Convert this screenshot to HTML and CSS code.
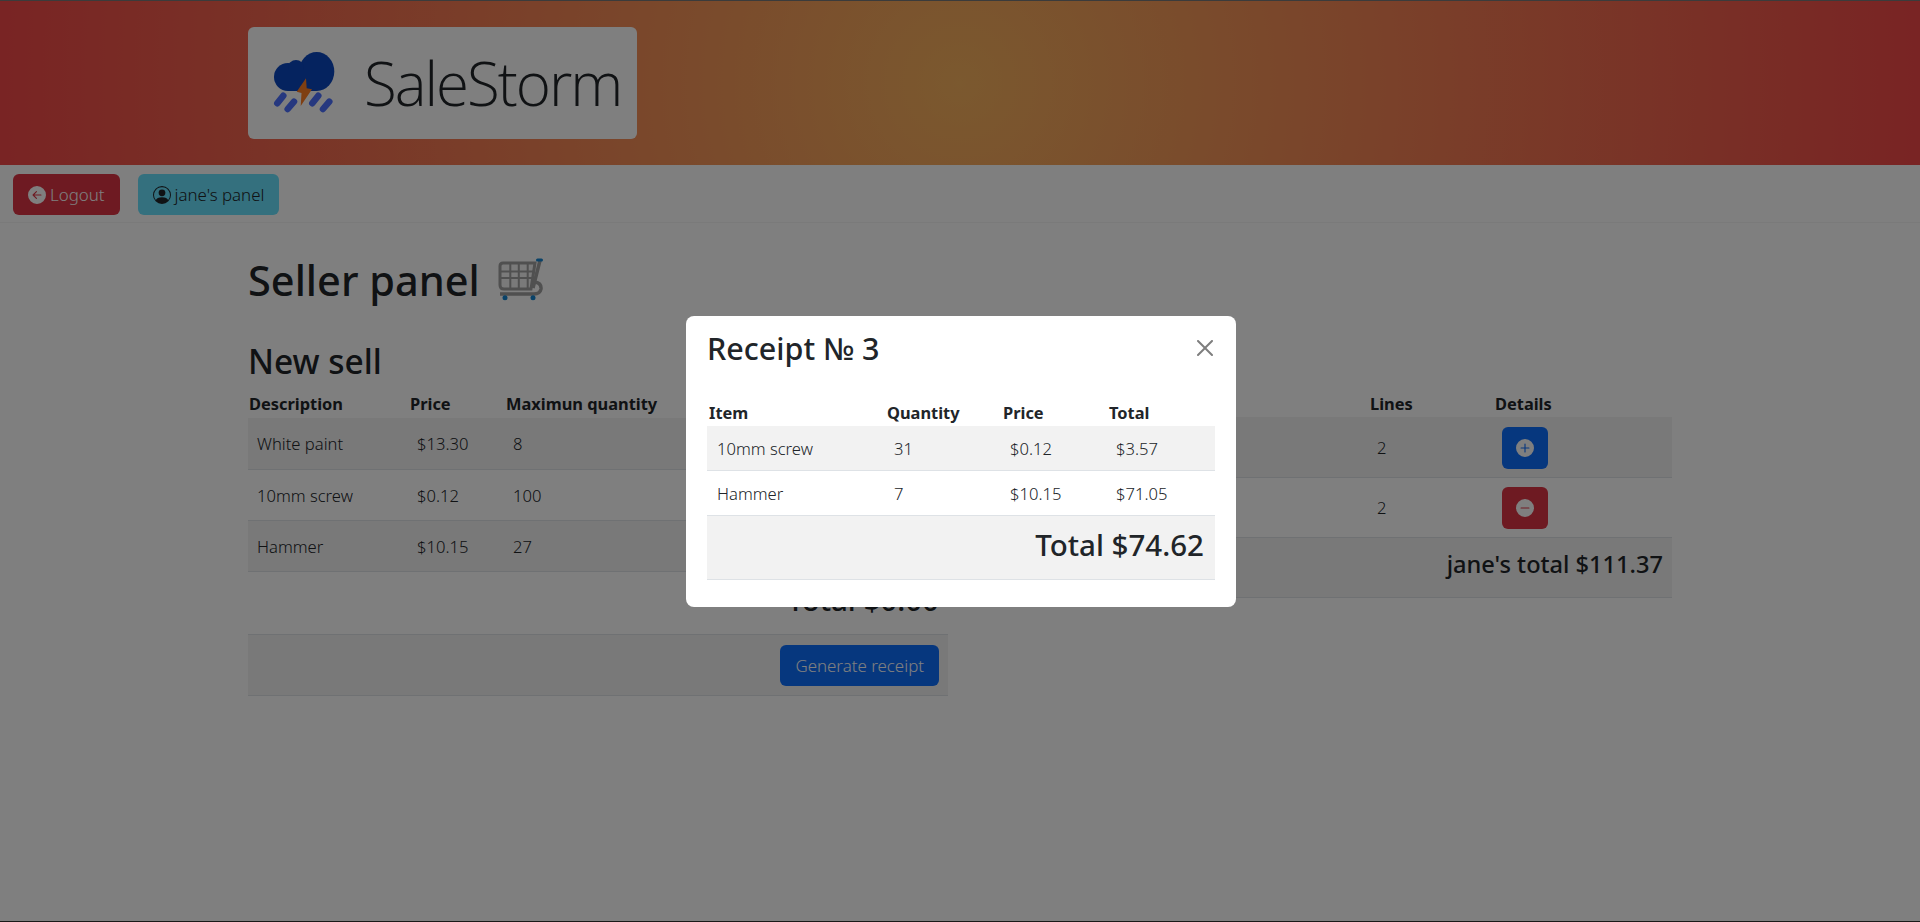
FILE: index.html
```html
<!DOCTYPE html>
<html lang="en">
<head>
    <meta charset="UTF-8">
    <meta name="viewport" content="width=device-width, initial-scale=1.0">
    <title>SaleStorm</title>
    <link rel="stylesheet" href="styles.css">
</head>
<body>

<header class="banner">
    <div class="container">
        <div class="logo">
            <svg class="logo-icon" viewBox="20 -3 70 112">
                <ellipse class="cloud" cx="66.700" cy="41.500" rx="17.600" ry="19.500"/>
                <circle class="cloud" cx="38" cy="47" r="14"/>
                <circle class="cloud" cx="46" cy="38" r="8"/>
                <rect class="cloud" x="38" y="40" width="28" height="21"/>
                <path class="drop" d="M33.300 65.700 27.300 73.300M44 71.700 37.700 79M68.300 65.700 62.300 73.300M79.300 71.700 73 79"/>
                <path class="bolt" d="M56 48.300 46.700 61.700 51.500 63 50.700 76 62 59.300 56.700 58.300z"/>
            </svg>
            <span class="logo-text">SaleStorm</span>
        </div>
    </div>
</header>

<nav class="topnav">
    <button class="btn btn-danger" type="button">
        <svg class="bi" viewBox="0 0 16 16"><path d="M8 0a8 8 0 1 0 0 16A8 8 0 0 0 8 0zm3.500 7.500a.5.5 0 0 1 0 1H5.707l2.147 2.146a.5.5 0 0 1-.708.708l-3-3a.5.5 0 0 1 0-.708l3-3a.5.5 0 1 1 .708.708L5.707 7.500H11.500z"/></svg>
        Logout
    </button>
    <button class="btn btn-info" type="button">
        <svg class="bi" viewBox="0 0 16 16"><path d="M11 6a3 3 0 1 1-6 0 3 3 0 0 1 6 0z"/><path fill-rule="evenodd" d="M0 8a8 8 0 1 1 16 0A8 8 0 0 1 0 8zm8-7a7 7 0 0 0-5.468 11.370C3.242 11.226 4.805 10 8 10s4.757 1.225 5.468 2.370A7 7 0 0 0 8 1z"/></svg>
        jane's panel
    </button>
</nav>

<main class="container">
    <h1 class="page-title">Seller panel
        <svg class="cart" viewBox="498 258 46 46">
            <path class="cart-basket" d="M503 264H535L531 290H504Q500 290 500 286V267Q500 264 503 264z"/>
            <path class="cart-grid" d="M510.300 264V290M518.800 264V290M527.700 264V290M500 272.500H534M500 279H533"/>
            <path class="cart-frame" d="M540 261.500 533 289M535 283Q541.500 284 541 290 540 295 534 295H500"/>
            <path class="cart-handle" d="M537.500 261H541.500"/>
            <circle class="cart-wheel" cx="505" cy="298.700" r="2.500"/>
            <circle class="cart-wheel" cx="533" cy="298.700" r="2.500"/>
        </svg>
    </h1>

    <div class="columns">
        <section>
            <h2 class="section-title">New sell</h2>
            <table class="table table-stock">
                <colgroup><col class="c-desc"><col class="c-price"><col></colgroup>
                <thead>
                    <tr><th>Description</th><th>Price</th><th>Maximun quantity</th></tr>
                </thead>
                <tbody>
                    <tr><td>White paint</td><td>$13.30</td><td>8</td></tr>
                    <tr><td>10mm screw</td><td>$0.12</td><td>100</td></tr>
                    <tr><td>Hammer</td><td>$10.15</td><td>27</td></tr>
                    <tr class="row-total"><td colspan="3"><h3>Total $0.00</h3></td></tr>
                    <tr class="row-action"><td colspan="3"><button class="btn btn-primary" type="button">Generate receipt</button></td></tr>
                </tbody>
            </table>
        </section>

        <section class="sales">
            <table class="table table-sales">
                <colgroup><col class="c-blank"><col class="c-lines"><col></colgroup>
                <thead>
                    <tr><th></th><th>Lines</th><th>Details</th></tr>
                </thead>
                <tbody>
                    <tr>
                        <td></td><td>2</td>
                        <td><button class="btn btn-primary btn-icon" type="button"><svg class="bi" viewBox="0 0 16 16"><path d="M16 8A8 8 0 1 1 0 8a8 8 0 0 1 16 0zM8.500 4.500a.5.5 0 0 0-1 0v3h-3a.5.5 0 0 0 0 1h3v3a.5.5 0 0 0 1 0v-3h3a.5.5 0 0 0 0-1h-3v-3z"/></svg></button></td>
                    </tr>
                    <tr>
                        <td></td><td>2</td>
                        <td><button class="btn btn-danger btn-icon" type="button"><svg class="bi" viewBox="0 0 16 16"><path d="M16 8A8 8 0 1 1 0 8a8 8 0 0 1 16 0zM4.500 7.500a.5.5 0 0 0 0 1h7a.5.5 0 0 0 0-1h-7z"/></svg></button></td>
                    </tr>
                    <tr class="row-total"><td colspan="3"><h4 class="sales-total">jane's total $111.37</h4></td></tr>
                </tbody>
            </table>
        </section>
    </div>
</main>

<div class="backdrop">
    <div class="modal">
        <div class="modal-header">
            <h4 class="modal-title">Receipt № 3</h4>
            <svg class="close" viewBox="0 0 16 16"><path d="M.293.293a1 1 0 0 1 1.414 0L8 6.586 14.293.293a1 1 0 1 1 1.414 1.414L9.414 8l6.293 6.293a1 1 0 0 1-1.414 1.414L8 9.414l-6.293 6.293a1 1 0 0 1-1.414-1.414L6.586 8 .293 1.707a1 1 0 0 1 0-1.414z"/></svg>
        </div>
        <table class="table table-receipt">
            <colgroup><col class="c-item"><col class="c-qty"><col class="c-unit"><col></colgroup>
            <thead>
                <tr><th>Item</th><th>Quantity</th><th>Price</th><th>Total</th></tr>
            </thead>
            <tbody>
                <tr><td>10mm screw</td><td>31</td><td>$0.12</td><td>$3.57</td></tr>
                <tr><td>Hammer</td><td>7</td><td>$10.15</td><td>$71.05</td></tr>
                <tr class="row-total"><td colspan="4"><h3>Total $74.62</h3></td></tr>
            </tbody>
        </table>
    </div>
</div>

</body>
</html>
```

FILE: styles.css
```css
* {
    box-sizing: border-box;
}
body {
    margin: 0;
    min-height: 922px;
    font-family: "Noto Sans", Arial, sans-serif;
    font-size: 16.4px;
    line-height: 24px;
    color: #212529;
    background-color: #fff;
    border-top: 1px solid #777;
    border-bottom: 1px solid #333;
}
.container {
    width: 1424px;
    margin: 0 auto;
}

/* header */
.banner {
    height: 164px;
    padding-top: 26px;
    background: radial-gradient(circle, #f6b25e, #f24848);
}
.logo {
    display: flex;
    align-items: center;
    width: 389px;
    height: 112px;
    padding-left: 22px;
    background-color: #fff;
    border-radius: 6px;
}
.logo-icon {
    width: 70px;
    height: 112px;
}
.cloud {
    fill: #0a46be;
}
.drop {
    fill: none;
    stroke: #4c70ff;
    stroke-width: 6.5;
    stroke-linecap: round;
}
.bolt {
    fill: #ff7e24;
}
.logo-text {
    margin-left: 24px;
    font-family: "Open Sans", sans-serif;
    font-size: 60px;
    font-weight: 300;
    line-height: 1;
    letter-spacing: -2px;
}

/* nav */
.topnav {
    display: flex;
    gap: 18px;
    height: 58px;
    padding: 9px 13px;
    border-bottom: 1px solid #f4f4f4;
}
.btn {
    display: inline-flex;
    align-items: center;
    gap: 4px;
    height: 41px;
    padding: 0 14px;
    font: inherit;
    font-size: 16.9px;
    font-weight: 300;
    border: 1px solid transparent;
    border-radius: 6px;
    cursor: pointer;
}
.btn-danger {
    color: #fff;
    background-color: #dc3545;
}
.btn-info {
    color: #212529;
    background-color: #68e0fc;
}
.btn-primary {
    color: #fff;
    background-color: #0d6efd;
}
.bi {
    width: 18px;
    height: 18px;
    fill: currentColor;
}

/* headings */
.page-title {
    display: flex;
    align-items: center;
    gap: 18px;
    height: 46px;
    margin: 34px 0 0;
    font-size: 41.5px;
    font-weight: 500;
    line-height: 46px;
}
.cart {
    width: 46px;
    height: 46px;
}
.cart-basket {
    fill: #f4f4f4;
    stroke: #a0a0a0;
    stroke-width: 3;
}
.cart-grid {
    fill: none;
    stroke: #a0a0a0;
    stroke-width: 2;
}
.cart-frame {
    fill: none;
    stroke: #a0a0a0;
    stroke-width: 3.5;
}
.cart-handle {
    fill: none;
    stroke: #1484d0;
    stroke-width: 3;
    stroke-linecap: round;
}
.cart-wheel {
    fill: #1484d0;
}
.section-title {
    margin: 39px 0 0;
    font-size: 33.5px;
    font-weight: 500;
    line-height: 38px;
}
h3 {
    margin: 0;
    font-size: 29.5px;
    font-weight: 500;
    line-height: 34px;
    text-align: right;
}
.sales-total {
    margin: 0 0 8px;
    font-size: 23.6px;
    font-weight: 500;
    line-height: 30px;
    text-align: right;
}
.columns {
    display: grid;
    grid-template-columns: 700px 700px;
    gap: 24px;
}

/* tables */
.table {
    width: 100%;
    border-collapse: collapse;
    table-layout: fixed;
}
.table th {
    height: 26px;
    padding: 0 1px 1px;
    font-weight: 700;
    text-align: left;
    vertical-align: bottom;
    line-height: 24px;
}
.table td {
    padding: 2px 8px 0;
    font-size: 16.6px;
    font-weight: 300;
    border-bottom: 1px solid #dee2e6;
}
.table td:first-child {
    padding-left: 9px;
}
.table tbody tr:nth-child(odd) td {
    background-color: #f2f2f2;
}
.table-stock {
    margin-top: 10px;
}
.table-stock th {
    height: 28px;
    padding-bottom: 2px;
}
.table-stock td {
    height: 51px;
}
.table-stock .row-total td {
    height: 63px;
}
.table-stock .row-total h3 {
    margin-bottom: 8px;
}
.table-stock .row-action td {
    height: 61px;
    padding-right: 9px;
    text-align: right;
}
.row-total td {
    padding-right: 9px;
}
.c-desc {
    width: 161px;
}
.c-price {
    width: 96px;
}
.sales {
    padding-top: 88px;
}
.table-sales td {
    height: 60px;
}
.c-blank {
    width: 397px;
}
.c-lines {
    width: 125px;
}
.btn-icon {
    width: 46px;
    height: 42px;
    padding: 0;
    justify-content: center;
}

/* receipt modal */
.backdrop {
    position: fixed;
    inset: 0;
    display: flex;
    align-items: center;
    justify-content: center;
    padding-left: 2px;
    background-color: rgba(0, 0, 0, .5);
}
.modal {
    width: 550px;
    height: 291px;
    padding: 0 21px;
    background-color: #fff;
    border-radius: 8px;
}
.modal-header {
    display: flex;
    align-items: center;
    justify-content: space-between;
    height: 64px;
    margin-bottom: 20px;
}
.modal-title {
    margin: 0;
    font-size: 30.5px;
    font-weight: 500;
    line-height: 34px;
}
.close {
    width: 16px;
    height: 16px;
    margin-right: 2px;
    fill: #000;
    opacity: .5;
}
.table-receipt th:first-child {
    padding-left: 2px;
}
.table-receipt td {
    height: 45px;
}
.table-receipt td:first-child {
    padding-left: 10px;
}
.table-receipt .row-total td {
    height: 64px;
    vertical-align: top;
    padding-top: 12px;
    padding-right: 11px;
}
.c-item {
    width: 179px;
}
.c-qty {
    width: 116px;
}
.c-unit {
    width: 106px;
}
```
